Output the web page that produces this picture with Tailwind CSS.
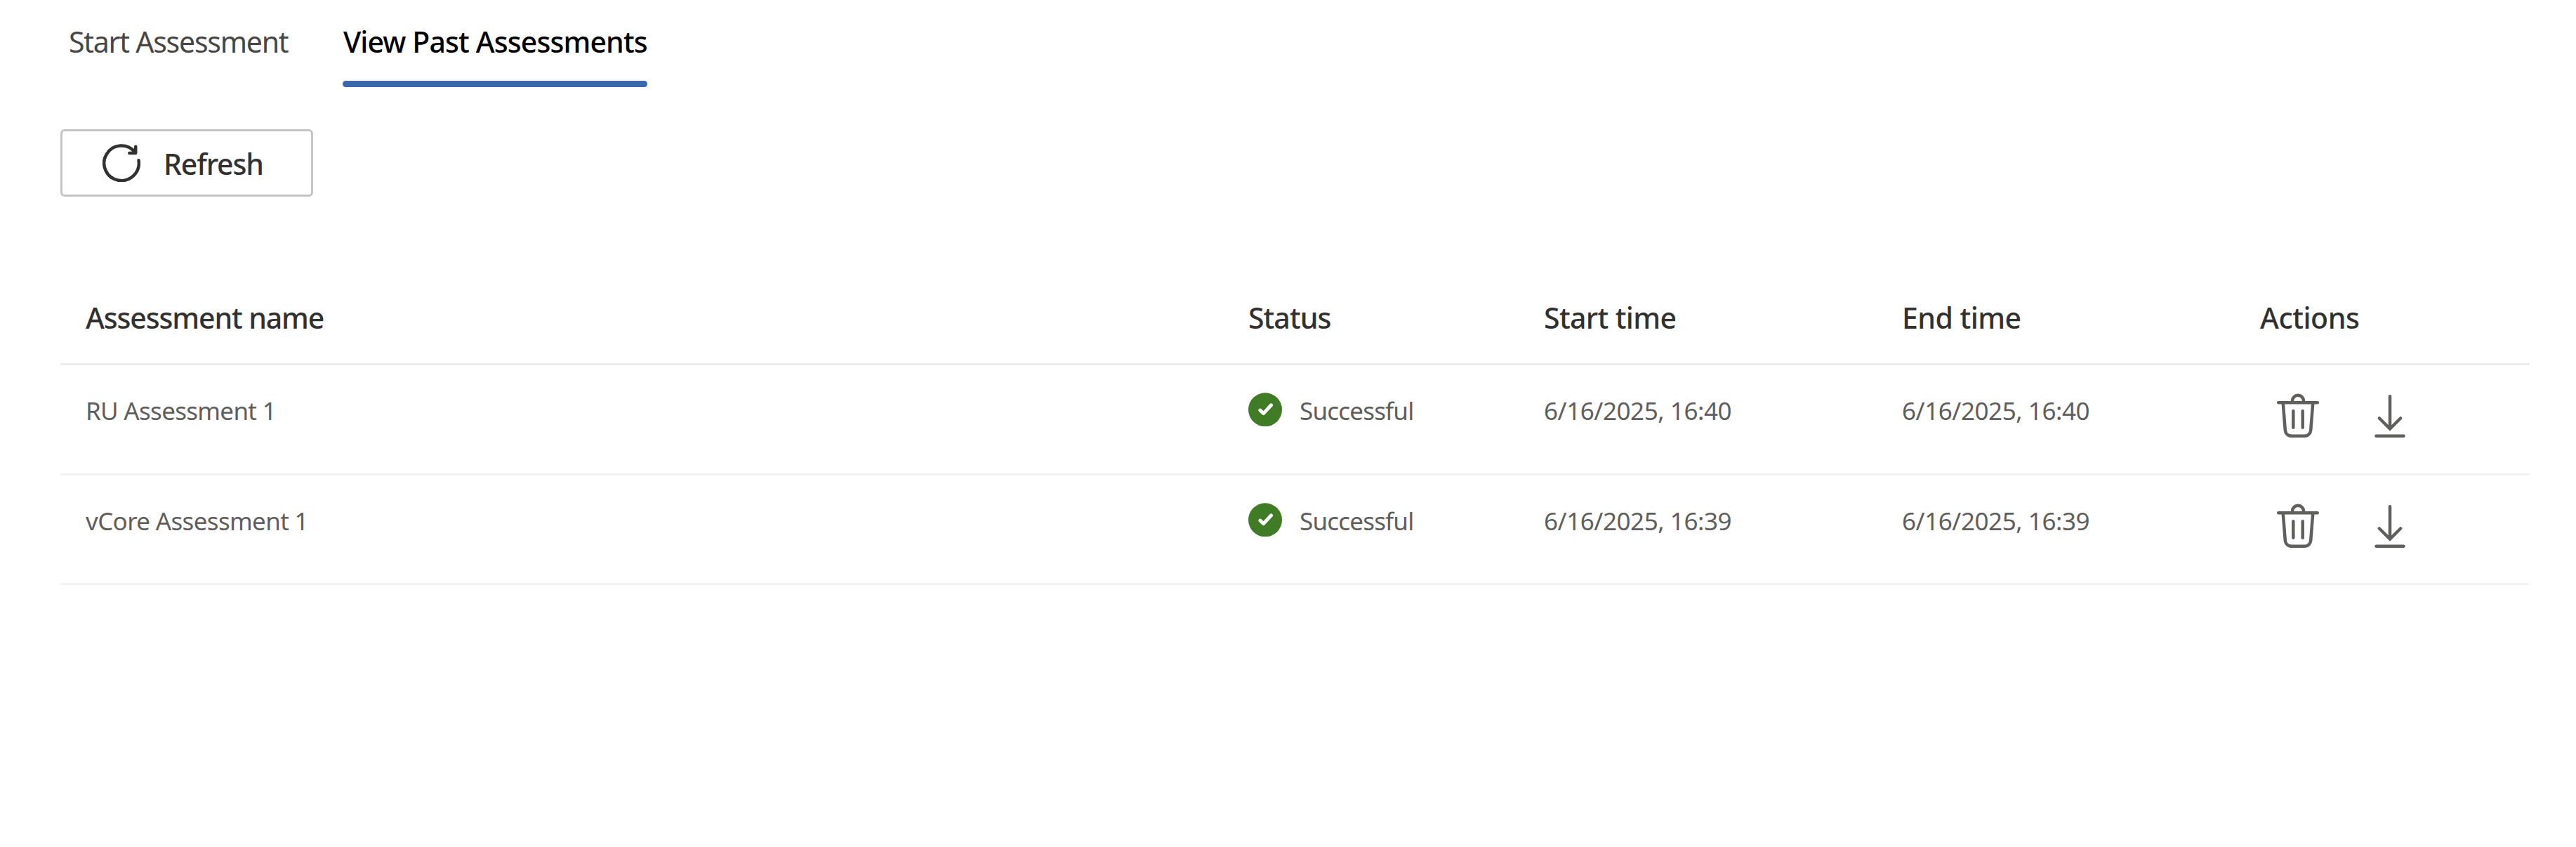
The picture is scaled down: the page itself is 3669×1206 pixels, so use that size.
<!DOCTYPE html>
<html lang="en">
<head>
<meta charset="utf-8">
<title>Past Assessments</title>
<script src="https://cdn.jsdelivr.net/npm/@tailwindcss/browser@4"></script>
</head>
<body class="min-h-screen bg-white font-['Segoe_UI','Noto_Sans',sans-serif] text-[#323130]">
<svg class="hidden">
  <symbol id="check" viewBox="0 0 48 48">
    <circle cx="24" cy="24.3" r="24" fill="#407b25"/>
    <path d="M16.8 25.2 21.6 29.6 32.6 17.8" fill="none" stroke="#fff" stroke-width="5" stroke-linecap="round" stroke-linejoin="round"/>
  </symbol>
  <symbol id="trash" viewBox="0 0 60 63">
    <g fill="none" stroke="#605f5e" stroke-width="4.5" stroke-linecap="round" stroke-linejoin="round">
      <path d="M2.2 13.2H57.8M8.7 13.2l3.1 39.3c.5 5 4.2 8.3 9.2 8.3h18c5 0 8.7-3.3 9.2-8.3l3.1-39.3M22 13.2v-2.4a8 8 0 0 1 16 0v2.4M23.3 25.2v23.5M36.7 25.2v23.5"/>
    </g>
  </symbol>
  <symbol id="download" viewBox="0 0 44 63">
    <path d="M22 4.2V50M6.9 35.5 22 50.6 37.1 35.5M2.5 60.7h39" fill="none" stroke="#605f5e" stroke-width="4.5" stroke-linecap="round"/>
  </symbol>
</svg>

<main class="pl-[86px] pr-[66px]">
  <nav class="flex text-[41px] leading-[60px] whitespace-nowrap">
    <a class="ml-3 w-[390px] pt-[29px] tracking-[-1.24px] text-[#484644]">Start Assessment</a>
    <a class="flex w-[434px] flex-col pt-[29px] font-medium tracking-[-0.88px] text-black"><span class="pl-px">View Past Assessments</span><span class="mt-[26px] h-[9px] rounded-full bg-[#3a68ad]"></span></a>
  </nav>

  <button class="mt-[60px] flex h-24 w-[360px] items-center rounded-md border-3 border-[#c4c4c4] pl-[57px] text-[41px] leading-[60px] font-medium tracking-[-1.13px]">
    <svg class="size-[54px]" viewBox="0 0 54 54" fill="none" stroke="#323130" stroke-width="4.5" stroke-linecap="round" stroke-linejoin="round">
      <path d="M51.5 23.2A24.8 24.8 0 1 1 46 11.3M47.2 3.8v9.2H38.3"/>
    </svg>
    <span class="ml-[33px] pt-0.5">Refresh</span>
  </button>

  <section class="mt-[107px]">
    <div class="grid h-[133px] grid-cols-[1656px_420px_511px_510px_1fr] border-b-3 border-[#ebebeb] pl-9 text-[41px] leading-[130px] font-medium">
      <div class="tracking-[-1.12px]">Assessment name</div>
      <div class="tracking-[-0.94px]">Status</div>
      <div class="pl-px tracking-[-0.61px]">Start time</div>
      <div class="tracking-[-0.54px]">End time</div>
      <div class="tracking-[-0.42px]">Actions</div>
    </div>

    <div class="grid h-[157px] grid-cols-[1656px_420px_511px_510px_1fr] items-start border-b-3 border-[#f3f2f1] pt-[39px] pl-9 text-[35px] leading-[52px] text-[#605e5c]">
      <div class="tracking-[-0.7px]">RU Assessment 1</div>
      <div class="flex gap-[25px] tracking-[-0.8px]"><svg class="size-12 overflow-visible"><use href="#check"/></svg>Successful</div>
      <div class="pl-px tracking-[-0.44px]">6/16/2025, 16:40</div>
      <div class="tracking-[-0.44px]">6/16/2025, 16:40</div>
      <div class="flex gap-[79px] pt-px pl-6"><svg class="h-[63px] w-[60px]"><use href="#trash"/></svg><svg class="h-[63px] w-11"><use href="#download"/></svg></div>
    </div>

    <div class="grid h-[156px] grid-cols-[1656px_420px_511px_510px_1fr] items-start border-b-3 border-[#f3f2f1] pt-[39px] pl-9 text-[35px] leading-[52px] text-[#605e5c]">
      <div class="tracking-[-0.65px]">vCore Assessment 1</div>
      <div class="flex gap-[25px] tracking-[-0.8px]"><svg class="size-12 overflow-visible"><use href="#check"/></svg>Successful</div>
      <div class="pl-px tracking-[-0.44px]">6/16/2025, 16:39</div>
      <div class="tracking-[-0.44px]">6/16/2025, 16:39</div>
      <div class="flex gap-[79px] pt-px pl-6"><svg class="h-[63px] w-[60px]"><use href="#trash"/></svg><svg class="h-[63px] w-11"><use href="#download"/></svg></div>
    </div>
  </section>
</main>
</body>
</html>
